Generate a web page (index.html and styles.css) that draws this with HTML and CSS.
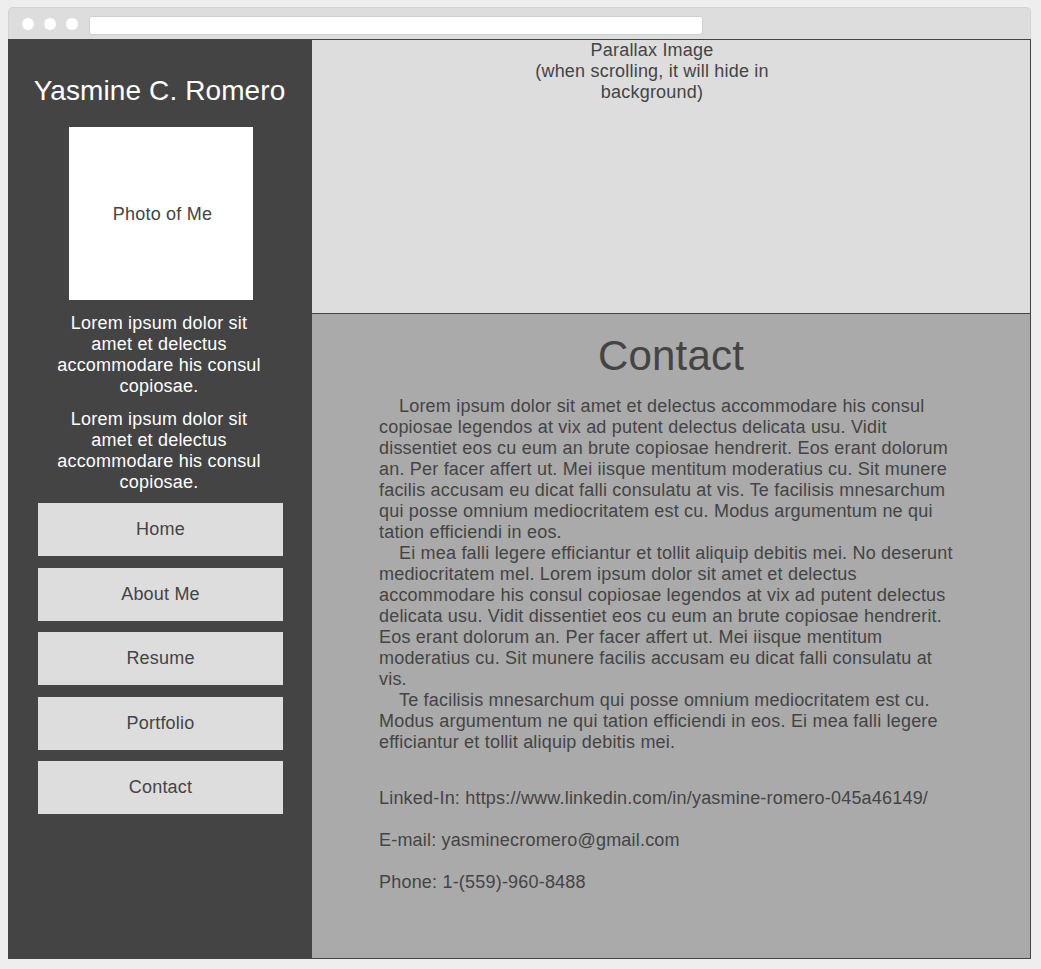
FILE: index.html
```html
<!DOCTYPE html>
<html lang="en">
<head>
<meta charset="utf-8">
<title>Yasmine C. Romero</title>
<link rel="stylesheet" href="styles.css">
</head>
<body>
<div class="window">
  <div class="titlebar">
    <span class="dot"></span>
    <span class="dot"></span>
    <span class="dot"></span>
    <span class="address"></span>
  </div>
  <div class="page">
    <aside class="sidebar">
      <h1 class="name">Yasmine C. Romero</h1>
      <div class="photo">Photo of Me</div>
      <p class="bio">Lorem ipsum dolor sit amet et delectus accommodare his consul copiosae.</p>
      <p class="bio bio2">Lorem ipsum dolor sit amet et delectus accommodare his consul copiosae.</p>
      <nav class="nav">
        <a class="nav-btn">Home</a>
        <a class="nav-btn">About Me</a>
        <a class="nav-btn">Resume</a>
        <a class="nav-btn">Portfolio</a>
        <a class="nav-btn">Contact</a>
      </nav>
    </aside>
    <main class="main">
      <section class="parallax">
        <p class="parallax-text">Parallax Image<br>(when scrolling, it will hide in background)</p>
      </section>
      <section class="contact">
        <h2 class="contact-title">Contact</h2>
        <div class="contact-body">
          <p class="para">Lorem ipsum dolor sit amet et delectus accommodare his consul copiosae legendos at vix ad putent delectus delicata usu. Vidit dissentiet eos cu eum an brute copiosae hendrerit. Eos erant dolorum an. Per facer affert ut. Mei iisque mentitum moderatius cu. Sit munere facilis accusam eu dicat falli consulatu at vis. Te facilisis mnesarchum qui posse omnium mediocritatem est cu. Modus argumentum ne qui tation efficiendi in eos.</p>
          <p class="para">Ei mea falli legere efficiantur et tollit aliquip debitis mei. No deserunt mediocritatem mel. Lorem ipsum dolor sit amet et delectus accommodare his consul copiosae legendos at vix ad putent delectus delicata usu. Vidit dissentiet eos cu eum an brute copiosae hendrerit. Eos erant dolorum an. Per facer affert ut. Mei iisque mentitum moderatius cu. Sit munere facilis accusam eu dicat falli consulatu at vis.</p>
          <p class="para">Te facilisis mnesarchum qui posse omnium mediocritatem est cu. Modus argumentum ne qui tation efficiendi in eos. Ei mea falli legere efficiantur et tollit aliquip debitis mei.</p>
          <p class="info first">Linked-In: https://www.linkedin.com/in/yasmine-romero-045a46149/</p>
          <p class="info">E-mail: yasminecromero@gmail.com</p>
          <p class="info">Phone: 1-(559)-960-8488</p>
        </div>
      </section>
    </main>
  </div>
</div>
</body>
</html>
```
FILE: styles.css
```css
html, body {
  margin: 0;
  padding: 0;
}
body {
  background: #eeeeee;
  font-family: "Liberation Sans", Arial, sans-serif;
  font-size: 18px;
  letter-spacing: 0.2px;
  color: #444444;
}
.window {
  margin: 7px 0 0 8px;
  width: 1023px;
}
.titlebar {
  box-sizing: border-box;
  height: 32px;
  background: #dddddd;
  border: 1px solid #d2d2d2;
  border-bottom: none;
  border-radius: 5px 5px 0 0;
  display: flex;
  align-items: center;
  padding-left: 13px;
  padding-top: 1px;
}
.dot {
  width: 12px;
  height: 12px;
  border-radius: 50%;
  background: #ffffff;
  margin-right: 10px;
}
.address {
  box-sizing: border-box;
  width: 614px;
  height: 19px;
  margin-left: 1px;
  margin-top: 2px;
  background: #ffffff;
  border: 1px solid #d0d0d0;
  border-radius: 3px;
}
.page {
  box-sizing: border-box;
  height: 920px;
  border: 1px solid #444444;
  display: flex;
}
.sidebar {
  width: 303px;
  flex: none;
  background: #444444;
  color: #ffffff;
  padding-top: 35px;
  display: flex;
  flex-direction: column;
  align-items: center;
}
.name {
  margin: 0 0 0 -2px;
  font-size: 28px;
  line-height: 32px;
  font-weight: normal;
  letter-spacing: 0.1px;
  white-space: nowrap;
}
.photo {
  width: 184px;
  height: 173px;
  margin-top: 20px;
  background: #ffffff;
  color: #444444;
  display: flex;
  align-items: center;
  justify-content: center;
  padding-left: 4px;
  padding-top: 2px;
  box-sizing: border-box;
}
.bio {
  width: 215px;
  margin: 13px 0 0 -3px;
  text-align: center;
  line-height: 21px;
}
.bio2 {
  margin-top: 12px;
}
.nav {
  margin-top: 10px;
  display: flex;
  flex-direction: column;
  gap: 11.5px;
}
.nav-btn {
  width: 245px;
  height: 53px;
  background: #dddddd;
  color: #444444;
  display: flex;
  align-items: center;
  justify-content: center;
  text-decoration: none;
}
.main {
  flex: 1;
  display: flex;
  flex-direction: column;
  min-width: 0;
}
.parallax {
  height: 273px;
  flex: none;
  background: #dddddd;
  border-bottom: 1px solid #444444;
}
.parallax-text {
  width: 244px;
  margin: 0 0 0 218px;
  text-align: center;
  line-height: 21px;
}
.contact {
  flex: 1;
  background: #aaaaaa;
  padding-top: 18px;
}
.contact-title {
  margin: 0;
  font-size: 42px;
  line-height: 48px;
  font-weight: normal;
  text-align: center;
}
.contact-body {
  width: 580px;
  margin: 16px 0 0 67px;
}
.para {
  margin: 0;
  line-height: 21px;
  text-indent: 20px;
}
.info {
  margin: 21px 0 0;
  line-height: 21px;
}
.info.first {
  margin-top: 35px;
}
```
